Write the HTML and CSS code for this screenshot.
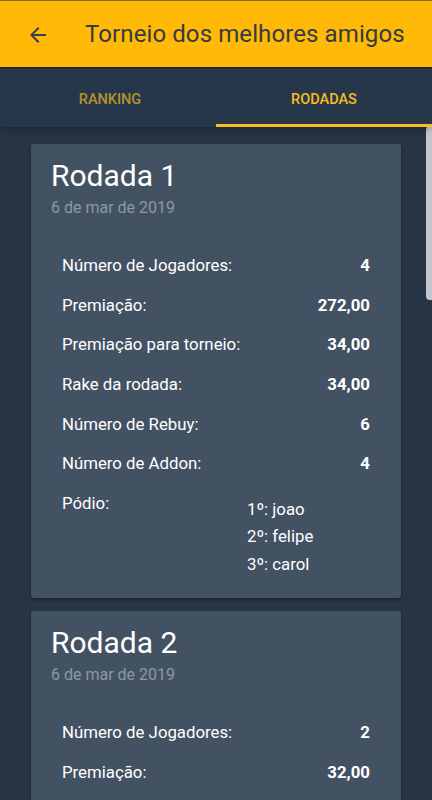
FILE: index.html
```html
<!DOCTYPE html>
<html lang="pt-BR">
<head>
<meta charset="utf-8">
<link rel="stylesheet" href="styles.css">
</head>
<body>
<header class="appbar">
  <svg class="back" width="24" height="24" viewBox="0 0 24 24"><path d="M20 11H7.83l5.59-5.59L12 4l-8 8 8 8 1.41-1.41L7.83 13H20v-2z" fill="#37404a"/></svg>
  <h1 class="title">Torneio dos melhores amigos</h1>
</header>
<nav class="tabs">
  <div class="tab first">RANKING</div>
  <div class="tab active">RODADAS</div>
</nav>
<main class="content">
  <section class="card">
    <h2 class="card-title">Rodada 1</h2>
    <div class="card-date">6 de mar de 2019</div>
    <div class="rows">
      <div class="row"><span>Número de Jogadores:</span><b>4</b></div>
      <div class="row"><span>Premiação:</span><b>272,00</b></div>
      <div class="row"><span>Premiação para torneio:</span><b>34,00</b></div>
      <div class="row"><span>Rake da rodada:</span><b>34,00</b></div>
      <div class="row"><span>Número de Rebuy:</span><b>6</b></div>
      <div class="row"><span>Número de Addon:</span><b>4</b></div>
      <div class="podium">
        <span>Pódio:</span>
        <ul>
          <li>1º: joao</li>
          <li>2º: felipe</li>
          <li>3º: carol</li>
        </ul>
      </div>
    </div>
  </section>
  <section class="card">
    <h2 class="card-title">Rodada 2</h2>
    <div class="card-date">6 de mar de 2019</div>
    <div class="rows">
      <div class="row"><span>Número de Jogadores:</span><b>2</b></div>
      <div class="row"><span>Premiação:</span><b>32,00</b></div>
      <div class="row"><span>Premiação para torneio:</span><b>4,00</b></div>
      <div class="row"><span>Rake da rodada:</span><b>4,00</b></div>
    </div>
  </section>
</main>
<div class="scrollbar"></div>
</body>
</html>
```
FILE: styles.css
```css
html, body {
  margin: 0;
  padding: 0;
  height: 800px;
  overflow: hidden;
  background: #263445;
  font-family: Roboto, "Noto Sans", sans-serif;
  color: #ffffff;
}
.appbar {
  height: 66px;
  background: #ffb906;
  border-top: 1px solid #8a6c12;
  display: flex;
  align-items: center;
  box-shadow: 0 1px 1px rgba(0,0,0,0.45);
  position: relative;
  z-index: 2;
}
.back {
  margin-left: 26px;
  margin-right: 35px;
  margin-top: 1px;
}
.title {
  margin: 0;
  font-size: 24px;
  font-weight: 400;
  color: #343b44;
  letter-spacing: 0.1px;
}
.tabs {
  height: 60px;
  display: flex;
  background: #27374a;
  box-shadow: 0 4px 6px rgba(0,0,0,0.18);
  position: relative;
  z-index: 1;
}
.tab {
  flex: 0 0 50%;
  display: flex;
  align-items: center;
  justify-content: center;
  font-size: 14.5px;
  font-weight: 500;
  color: #b8922c;
  padding-top: 4px;
  box-sizing: border-box;
}
.tab.first {
  padding-left: 4px;
}
.tab.active {
  color: #f6bf1e;
  border-bottom: 3.5px solid #f6bf1e;
  padding-top: 7.5px;
}
.content {
  padding: 17px 31px 0;
  display: flex;
  flex-direction: column;
  gap: 13px;
}
.card {
  background: #435263;
  border-radius: 3px;
  box-shadow: 0 2px 3px rgba(0,0,0,0.3);
  padding: 14px 20px 20px;
}
.card-title {
  margin: 0;
  font-size: 30px;
  font-weight: 400;
  line-height: 36px;
}
.card-date {
  font-size: 16px;
  color: #8c98a6;
  line-height: 20px;
  margin-top: 4px;
}
.rows {
  padding: 27px 11px 0 11px;
}
.row {
  display: flex;
  justify-content: space-between;
  align-items: center;
  height: 39.7px;
  font-size: 16.8px;
}
.row b {
  font-weight: 700;
}
.podium {
  display: grid;
  grid-template-columns: 185px 1fr;
  font-size: 16.8px;
  padding-top: 10px;
}
.podium ul {
  list-style: none;
  margin: 0;
  padding: 3px 0 0;
}
.podium li {
  line-height: 27.3px;
}
.podium > span {
  line-height: 20px;
}
.scrollbar {
  position: absolute;
  left: 426px;
  top: 126px;
  width: 10px;
  height: 174px;
  border-radius: 4px;
  background: #c2c8cd;
}
```
